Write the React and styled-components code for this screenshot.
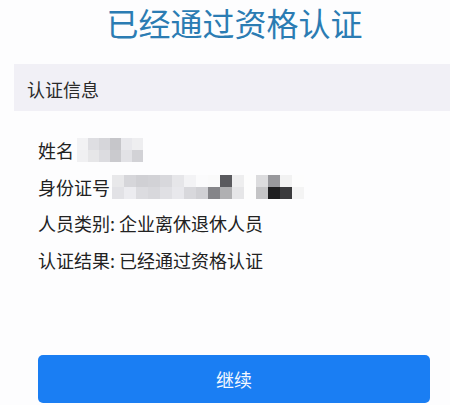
import React from "react";
import styled, { createGlobalStyle } from "styled-components";

const Global = createGlobalStyle`
  html, body { margin: 0; padding: 0; background: #fdfdfe; }
  body { font-family: "Noto Sans CJK SC", "Noto Sans", sans-serif; }
`;

const Page = styled.div`
  width: 450px;
  height: 405px;
  display: flex;
  flex-direction: column;
  overflow: hidden;
`;

const Title = styled.h1`
  margin: 0 0 20px;
  padding-left: 19px;
  height: 44px;
  line-height: 44px;
  font-size: 32px;
  font-weight: 400;
  text-align: center;
  color: #2b7cb3;
`;

const SectionHeader = styled.div`
  margin-left: 14px;
  height: 47px;
  display: flex;
  align-items: center;
  padding: 3px 0 0 13px;
  box-sizing: border-box;
  background: #f1f0f6;
  font-size: 18px;
  color: #2a2a2a;
`;

const InfoList = styled.div`
  display: flex;
  flex-direction: column;
  padding: 21px 0 0 38px;
`;

const Row = styled.div`
  display: flex;
  align-items: center;
  height: 36.5px;
  font-size: 18px;
  color: #222;
  white-space: pre;
`;

const Mosaic = styled.div`
  display: grid;
  grid-template-columns: repeat(${(p) => p.$cols}, ${(p) => p.$cell}px);
  grid-auto-rows: 12px;
  margin-left: ${(p) => p.$offset}px;
  filter: blur(0.6px);
`;

const Cell = styled.span`
  background: ${(p) => p.$c};
`;

const Button = styled.button`
  margin: auto 20px 2px 38px;
  height: 48px;
  border: none;
  border-radius: 5px;
  background: #1a7ef3;
  color: #f4f8ff;
  font-family: "Noto Sans CJK SC", "Noto Sans", sans-serif;
  font-size: 18px;
  padding: 0;
`;

const nameCells = [
  ["#f2f2f4", "#dedee2", "#d6d6da", "#c6c6ca", "#e8e8ec", "#eeeef0"],
  ["#f0f0f2", "#e6e6e8", "#dcdce0", "#cacace", "#e2e2e6", "#d2d2d6"],
];

const idCells = [
  ["#e8e8ea", "#d6d6da", "#d0d0d4", "#d2d2d6", "#d8d8dc", "#e6e6e9", "#f3f3f5", "#fbfbfc", "#fafafa", "#5a5a5e", "#eeeeef", "#fdfdfd", "#dcdcde", "#98989c", "#f2f2f2", "#fdfdfd"],
  ["#e2e2e6", "#ececf0", "#dcdce0", "#d8d8dc", "#e0e0e4", "#e8e8ec", "#d8d8dc", "#d0d0d4", "#858589", "#b0b0b2", "#e6e6e8", "#fdfdfd", "#c4c4c6", "#1e1e20", "#3a3a3c", "#f4f4f4"],
];

function Blur({ cells, cell, offset }) {
  return (
    <Mosaic $cols={cells[0].length} $cell={cell} $offset={offset}>
      {cells.flat().map((c, i) => (
        <Cell key={i} $c={c} />
      ))}
    </Mosaic>
  );
}

export default function App() {
  return (
    <Page>
      <Global />
      <Title>已经通过资格认证</Title>
      <SectionHeader>认证信息</SectionHeader>
      <InfoList>
        <Row>
          姓名
          <Blur cells={nameCells} cell={11} offset={3} />
        </Row>
        <Row>
          身份证号
          <Blur cells={idCells} cell={12} offset={2} />
        </Row>
        <Row>人员类别: 企业离休退休人员</Row>
        <Row>认证结果: 已经通过资格认证</Row>
      </InfoList>
      <Button>继续</Button>
    </Page>
  );
}
